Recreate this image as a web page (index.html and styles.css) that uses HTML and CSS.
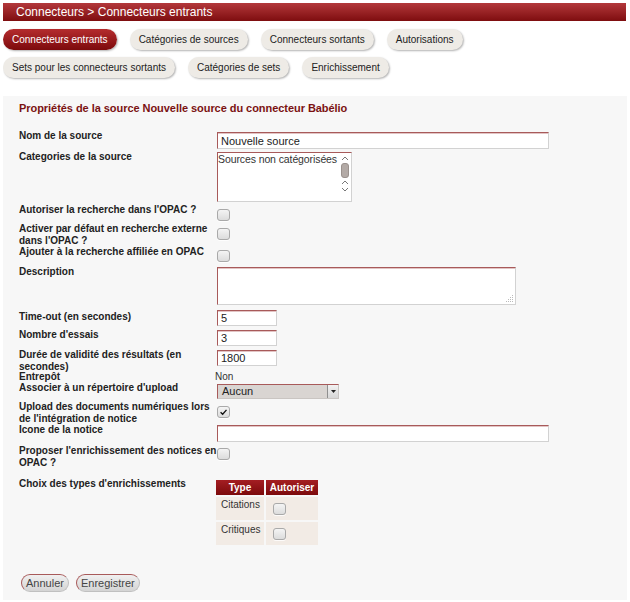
FILE: index.html
```html
<!DOCTYPE html>
<html lang="fr">
<head>
<meta charset="utf-8">
<title>Connecteurs entrants</title>
<link rel="stylesheet" href="styles.css">
</head>
<body>
<div class="titlebar">Connecteurs &gt; Connecteurs entrants</div>
<nav class="tabs">
  <div class="tabrow">
    <a class="tab active">Connecteurs entrants</a>
    <a class="tab">Catégories de sources</a>
    <a class="tab">Connecteurs sortants</a>
    <a class="tab">Autorisations</a>
  </div>
  <div class="tabrow">
    <a class="tab">Sets pour les connecteurs sortants</a>
    <a class="tab">Catégories de sets</a>
    <a class="tab">Enrichissement</a>
  </div>
</nav>
<main class="panel">
  <h1 class="heading">Propriétés de la source Nouvelle source du connecteur Babélio</h1>
  <form class="form">
    <div class="row r1"><div class="lbl">Nom de la source</div><div class="fld off2"><div class="input wide">Nouvelle source</div></div></div>
    <div class="row r2"><div class="lbl">Categories de la source</div><div class="fld off1">
      <div class="listbox"><span class="opt">Sources non catégorisées</span>
        <span class="scroll">
          <svg class="arrow" viewBox="0 0 8 5"><path d="M1 4 L4 1 L7 4" fill="none" stroke="#777" stroke-width="1"/></svg>
          <span class="thumb"></span>
          <svg class="arrow" viewBox="0 0 8 5"><path d="M1 4 L4 1 L7 4" fill="none" stroke="#777" stroke-width="1"/></svg>
          <svg class="arrow" viewBox="0 0 8 5"><path d="M1 1 L4 4 L7 1" fill="none" stroke="#777" stroke-width="1"/></svg>
        </span>
      </div></div></div>
    <div class="row r3"><div class="lbl">Autoriser la recherche dans l'OPAC ?</div><div class="fld off5"><span class="cb"></span></div></div>
    <div class="row r4"><div class="lbl">Activer par défaut en recherche externe dans l'OPAC ?</div><div class="fld off5"><span class="cb"></span></div></div>
    <div class="row r5"><div class="lbl">Ajouter à la recherche affiliée en OPAC</div><div class="fld off4"><span class="cb"></span></div></div>
    <div class="row r6"><div class="lbl">Description</div><div class="fld off1"><div class="input area"><svg class="grip" viewBox="0 0 9 9"><g fill="#bbb"><rect x="7" y="1" width="1" height="1"/><rect x="5" y="3" width="1" height="1"/><rect x="7" y="3" width="1" height="1"/><rect x="3" y="5" width="1" height="1"/><rect x="5" y="5" width="1" height="1"/><rect x="7" y="5" width="1" height="1"/><rect x="1" y="7" width="1" height="1"/><rect x="3" y="7" width="1" height="1"/><rect x="5" y="7" width="1" height="1"/><rect x="7" y="7" width="1" height="1"/></g></svg></div></div></div>
    <div class="row r7"><div class="lbl">Time-out (en secondes)</div><div class="fld offm1"><div class="input small">5</div></div></div>
    <div class="row r8"><div class="lbl">Nombre d'essais</div><div class="fld off1"><div class="input small">3</div></div></div>
    <div class="row r9"><div class="lbl">Durée de validité des résultats (en secondes)</div><div class="fld off1"><div class="input small">1800</div></div></div>
    <div class="row r10"><div class="lbl">Entrepôt</div><div class="fld plain">Non</div></div>
    <div class="row r11"><div class="lbl">Associer à un répertoire d'upload</div><div class="fld off2"><div class="select">Aucun<span class="dd"><svg viewBox="0 0 5 3"><path d="M0 0 H5 L2.5 3 Z" fill="#222"/></svg></span></div></div></div>
    <div class="row r12"><div class="lbl">Upload des documents numériques lors de l'intégration de notice</div><div class="fld off5"><span class="cb checked"><svg viewBox="0 0 12 12"><path d="M2.5 6.2 L5 8.6 L9.6 3.4" fill="none" stroke="#111" stroke-width="1.6"/></svg></span></div></div>
    <div class="row r13"><div class="lbl">Icone de la notice</div><div class="fld off1"><div class="input wide"></div></div></div>
    <div class="row r14"><div class="lbl">Proposer l'enrichissement des notices en OPAC ?</div><div class="fld off3"><span class="cb"></span></div></div>
    <div class="row r15"><div class="lbl">Choix des types d'enrichissements</div><div class="fld off1">
      <table class="enrich">
        <thead><tr><th class="c1">Type</th><th class="c2">Autoriser</th></tr></thead>
        <tbody>
          <tr><td>Citations</td><td><span class="cb"></span></td></tr>
          <tr><td>Critiques</td><td><span class="cb"></span></td></tr>
        </tbody>
      </table>
    </div></div>
    <div class="buttons">
      <button type="button" class="btn">Annuler</button>
      <button type="button" class="btn">Enregistrer</button>
    </div>
  </form>
</main>
</body>
</html>
```
FILE: styles.css
```css
html, body { background: #fff; }
body {
  margin: 3px;
  font-family: "Liberation Sans", Arial, sans-serif;
  color: #222;
}
.titlebar {
  height: 18px;
  line-height: 18px;
  padding-left: 13px;
  font-size: 12px;
  color: #fff;
  background: linear-gradient(#b3383b, #7e0d0f);
  width: 610px;
}
.tabs { margin-top: 8px; }
.tabrow { display: flex; gap: 13px; margin-bottom: 7px; }
.tabrow:last-child { margin-bottom: 0; }
.tab {
  display: block;
  height: 21px;
  line-height: 21px;
  padding: 0 9px;
  font-size: 10px;
  color: #222;
  background: #eeebe6;
  border-radius: 11px;
  box-shadow: 1px 1px 2px rgba(0,0,0,0.3);
  white-space: nowrap;
}
.tab.active {
  color: #fff;
  background: linear-gradient(#b52c2e, #7c0a0c);
}
.panel {
  margin-top: 18px;
  background: #f7f7f7;
  padding: 6px 0 8px 16px;
}
.heading {
  margin: 0;
  font-size: 11px;
  line-height: 13px;
  font-weight: bold;
  color: #7b1212;
  letter-spacing: -0.05px;
}
.form { margin-top: 15px; }
.row { display: flex; align-items: flex-start; }
.lbl {
  width: 198px;
  flex: none;
  font-size: 10px;
  line-height: 12px;
  font-weight: bold;
  color: #222;
}
.r1 { height: 21px; }
.r2 { height: 53px; }
.r3 { height: 19px; }
.r4 { height: 23px; }
.r5 { height: 20px; }
.r6 { height: 45px; }
.r7 { height: 18px; }
.r8 { height: 20px; }
.r9 { height: 22px; }
.r10 { height: 11px; }
.r11 { height: 19px; }
.r12 { height: 23px; }
.r13 { height: 21px; }
.r14 { height: 33px; }
.off1 { margin-top: 1px; }
.off2 { margin-top: 2px; }
.off3 { margin-top: 3px; }
.off4 { margin-top: 4px; }
.off5 { margin-top: 5px; }
.offm1 { margin-top: -1px; }
.plain { margin-left: -2px; font-size: 10px; line-height: 12px; color: #333; }
.input {
  box-sizing: border-box;
  background: #fff;
  border: 1px solid;
  border-color: #a85a5a #d2d2d2 #d2d2d2 #a85a5a;
  box-shadow: inset 0 1px 0 #e2c4c4;
  font-size: 11px;
  line-height: 14px;
  padding: 1px 3px;
  color: #222;
}
.wide { width: 332px; height: 17px; }
.small { width: 60px; height: 16px; line-height: 13px; }
.area { width: 299px; height: 38px; position: relative; }
.grip { position: absolute; right: 1px; bottom: 1px; width: 9px; height: 9px; }
.listbox {
  box-sizing: border-box;
  position: relative;
  width: 135px;
  height: 50px;
  background: #fff;
  border: 1px solid;
  border-color: #a85a5a #d2d2d2 #d2d2d2 #a85a5a;
  font-size: 10.5px;
  line-height: 13px;
  color: #333;
}
.opt { display: block; white-space: nowrap; letter-spacing: -0.1px; }
.scroll {
  position: absolute;
  right: 1px; top: 1px; bottom: 1px;
  width: 10px;
  display: flex;
  flex-direction: column;
  align-items: center;
}
.arrow { width: 8px; height: 5px; margin-top: 2px; }
.thumb {
  display: block;
  width: 8px; height: 15px;
  margin-top: 2px;
  background: #b3aaa6;
  border-radius: 3px;
  border: 1px solid #9a918d;
  box-sizing: border-box;
}
.cb {
  display: block;
  box-sizing: border-box;
  width: 13px; height: 12px;
  border: 1px solid #a9a9a9;
  border-radius: 3px;
  background: linear-gradient(#f4f4f4, #dcdcdc);
  box-shadow: 0 1px 0 rgba(255,255,255,0.8);
}
.cb svg { display: block; width: 11px; height: 10px; }
.select {
  box-sizing: border-box;
  position: relative;
  width: 122px; height: 15px;
  background: #d9d5d2;
  border: 1px solid;
  border-color: #a85a5a #c9c5c2 #c9c5c2 #a85a5a;
  font-size: 11px; line-height: 13px;
  padding-left: 4px;
  color: #222;
}
.dd {
  position: absolute;
  right: 0; top: 0; bottom: 0;
  width: 10px;
  background: linear-gradient(#f2f2f2, #d6d6d6);
  border-left: 1px solid #8f8f8f;
  display: flex; align-items: center; justify-content: center;
}
.dd svg { width: 5px; height: 3px; }
.enrich { border-spacing: 2px; margin-left: -3px; margin-top: -1px; border-collapse: separate; }
.enrich th {
  background: linear-gradient(#a41e22, #7c0a0c);
  color: #fff;
  font-size: 10px; line-height: 13px;
  font-weight: bold;
  padding: 1px 3px;
  text-align: center;
}
.enrich .c1 { width: 42px; }
.enrich .c2 { width: 46px; }
.enrich td {
  background: #f2ebe5;
  height: 23px;
  padding: 0 0 0 5px;
  vertical-align: top;
  font-size: 10px;
  line-height: 12px;
  color: #333;
}
.enrich td:first-child { padding-top: 2px; height: 21px; }
.enrich td .cb { margin-top: 6px; margin-left: 2px; }
.buttons { display: flex; gap: 7px; margin-top: 27px; margin-left: 2px; }
.btn {
  height: 18px;
  padding: 0 4px;
  font-family: "Liberation Sans", Arial, sans-serif;
  font-size: 11px;
  line-height: 14px;
  color: #444;
  background: linear-gradient(#f0f0f0, #d4d4d4);
  border: 1px solid;
  border-color: #a85a5a #c0c0c0 #c0c0c0 #a85a5a;
  border-radius: 9px;
}
```
